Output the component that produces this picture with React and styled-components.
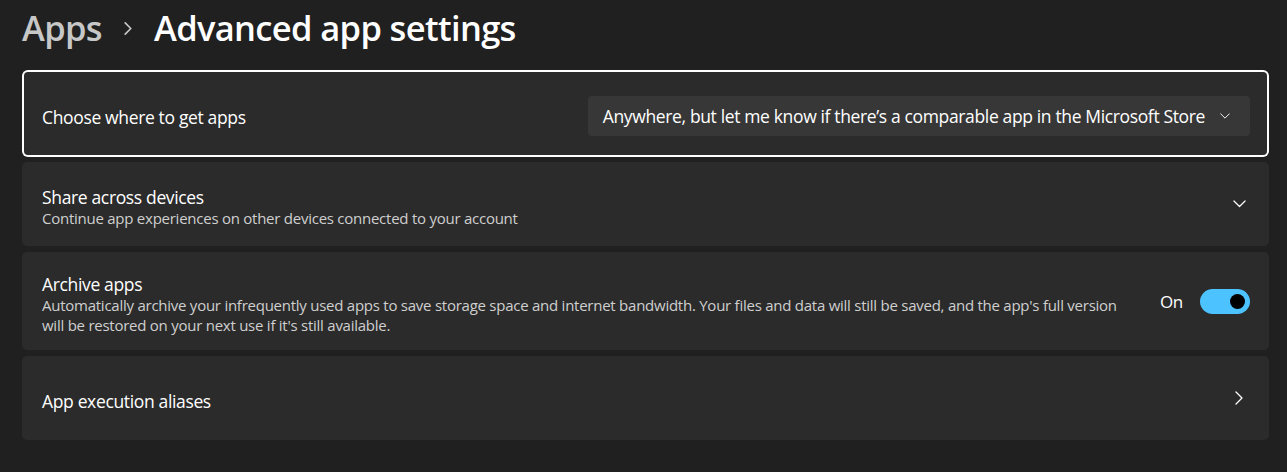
import React from 'react';
import styled, {createGlobalStyle} from 'styled-components';

const GlobalStyle = createGlobalStyle`
  html, body {
    margin: 0;
    padding: 0;
    background: #202020;
  }
  body {
    font-family: "Open Sans", "Noto Sans", sans-serif;
    color: #ffffff;
    -webkit-font-smoothing: antialiased;
  }
`;

const Page = styled.div`
  width: 1287px;
  height: 472px;
  box-sizing: border-box;
  padding: 0 18px 0 22px;
  background: #202020;
  overflow: hidden;
`;

const Header = styled.div`
  display: flex;
  align-items: center;
  height: 54px;
  margin-bottom: 16px;
  font-size: 34.5px;
  font-weight: 600;
  letter-spacing: -0.65px;
`;

const Crumb = styled.span`
  color: ${p => (p.$current ? '#ffffff' : '#c7c7c7')};
`;

const CrumbSep = styled.span`
  display: flex;
  align-items: center;
  margin: 2px 22px 0 22px;
  color: #c7c7c7;
`;

const List = styled.div`
  display: flex;
  flex-direction: column;
  gap: 6px;
`;

const Card = styled.div`
  display: flex;
  align-items: center;
  min-height: ${p => p.$height || 84}px;
  box-sizing: border-box;
  padding: 0 19px 0 20px;
  background: #2b2b2b;
  border-radius: 5px;
  ${p => p.$focused && `
    box-shadow: inset 0 0 0 2px #ffffff;
    border-radius: 6px;
    margin-bottom: -1px;
  `}
`;

const Text = styled.div`
  flex: 1;
  display: flex;
  flex-direction: column;
  min-width: 0;
  padding-top: 6px;
`;

const Title = styled.div`
  font-size: 17.5px;
  line-height: 22px;
  letter-spacing: -0.35px;
  color: #ffffff;
`;

const Desc = styled.div`
  font-size: 15px;
  line-height: 20px;
  letter-spacing: -0.25px;
  color: #cfcfcf;
`;

const Select = styled.div`
  display: flex;
  align-items: center;
  height: 40px;
  margin-top: 4px;
  box-sizing: border-box;
  padding: 1px 20px 0 15px;
  background: #373737;
  border-radius: 4px;
  font-size: 17.5px;
  letter-spacing: -0.36px;
  color: #ffffff;
  gap: 15px;
`;

const Side = styled.div`
  display: flex;
  align-items: center;
  gap: 17px;
`;

const StateLabel = styled.span`
  font-size: 17px;
  letter-spacing: -0.3px;
  color: #ffffff;
`;

const Toggle = styled.div`
  display: flex;
  align-items: center;
  justify-content: ${p => (p.$on ? 'flex-end' : 'flex-start')};
  width: 50px;
  height: 25px;
  box-sizing: border-box;
  padding: 0 5px;
  border-radius: 13px;
  background: ${p => (p.$on ? '#4cc2ff' : 'transparent')};
`;

const Knob = styled.span`
  width: 15px;
  height: 15px;
  border-radius: 50%;
  background: #000000;
`;

const IconBox = styled.div`
  display: flex;
  align-items: center;
  justify-content: center;
  width: 20px;
  margin-right: 1px;
  color: #ffffff;
`;

const ChevronDown = ({size = 13}) => (
    <svg width={size} height={size / 2 + 1} viewBox="0 0 14 8" fill="none">
        <path d="M1 1l6 6 6-6" stroke="currentColor" strokeWidth="1.3" strokeLinecap="round" strokeLinejoin="round"/>
    </svg>
);

const ChevronRight = ({w = 8, h = 14, stroke = 1.3}) => (
    <svg width={w} height={h} viewBox="0 0 8 14" fill="none">
        <path d="M1 1l6 6-6 6" stroke="currentColor" strokeWidth={stroke} strokeLinecap="round" strokeLinejoin="round"/>
    </svg>
);

const App = () => {
    return (
        <Page>
            <GlobalStyle/>
            <Header>
                <Crumb>Apps</Crumb>
                <CrumbSep><ChevronRight w={8} h={13} stroke={1.8}/></CrumbSep>
                <Crumb $current>Advanced app settings</Crumb>
            </Header>
            <List>
                <Card $focused $height={87}>
                    <Text>
                        <Title>Choose where to get apps</Title>
                    </Text>
                    <Select>
                        <span>Anywhere, but let me know if there’s a comparable app in the Microsoft Store</span>
                        <ChevronDown size={10}/>
                    </Select>
                </Card>
                <Card>
                    <Text>
                        <Title>Share across devices</Title>
                        <Desc>Continue app experiences on other devices connected to your account</Desc>
                    </Text>
                    <IconBox><ChevronDown size={13}/></IconBox>
                </Card>
                <Card $height={98}>
                    <Text>
                        <Title>Archive apps</Title>
                        <Desc>
                            Automatically archive your infrequently used apps to save storage space and internet bandwidth. Your files and data will still be saved, and the app's full version
                            <br/>
                            will be restored on your next use if it's still available.
                        </Desc>
                    </Text>
                    <Side>
                        <StateLabel>On</StateLabel>
                        <Toggle $on><Knob/></Toggle>
                    </Side>
                </Card>
                <Card>
                    <Text>
                        <Title>App execution aliases</Title>
                    </Text>
                    <IconBox><ChevronRight/></IconBox>
                </Card>
            </List>
        </Page>
    );
};

export default App;
